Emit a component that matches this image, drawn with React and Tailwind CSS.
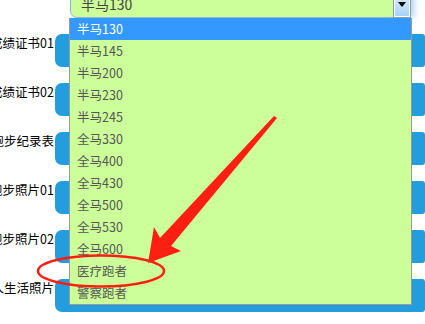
import React from 'react';

const options = [
    '半马130', '半马145', '半马200', '半马230', '半马245',
    '全马330', '全马400', '全马430', '全马500', '全马530', '全马600',
    '医疗跑者', '警察跑者',
];

const rows = ['成绩证书01', '成绩证书02', '跑步纪录表', '跑步照片01', '跑步照片02', '个人生活照片'];

const font = { fontFamily: '"Microsoft YaHei", "Noto Sans CJK SC", "Noto Sans", sans-serif' };

export default function App() {
    return (
        <div className="relative w-[425px] h-[324px] overflow-hidden bg-white" style={font}>
            {/* select field, scrolled partly off the top */}
            <div className="flex mt-[-10px]">
                <div className="w-[70px] shrink-0" />
                <div className="relative w-[341px] h-[28px] bg-[#ccff99] border border-[#8fb8e0] rounded-bl-[7px] shadow-[3px_0_6px_rgba(120,180,240,0.6)] flex items-center">
                    <span className="pl-[10px] text-[14px] text-[#444] leading-none">半马130</span>
                    <div className="absolute right-0 top-0 bottom-0 w-[16px] border border-white outline outline-1 outline-[#8a9cb0] bg-gradient-to-b from-[#e4f2ff] to-[#a6d3f6] flex justify-center items-center">
                        <div className="w-0 h-0 border-l-[4px] border-r-[4px] border-t-[5px] border-l-transparent border-r-transparent border-t-black" />
                    </div>
                </div>
            </div>

            {/* form rows */}
            <div className="flex flex-col gap-[16px] mt-[16px]">
                {rows.map((label) => (
                    <div key={label} className="flex h-[33px]">
                        <div className="w-[55px] shrink-0 flex justify-end overflow-visible">
                            <span className="whitespace-nowrap text-[12.5px] leading-[17px] pr-[1px] text-black">{label}</span>
                        </div>
                        <div className="w-[370px] h-[33px] bg-[#239ddd] rounded-l-[7px] rounded-r-[3px]" />
                    </div>
                ))}
            </div>

            {/* open dropdown list */}
            <ul className="absolute left-[69px] top-[18px] w-[343px] h-[287px] bg-[#ccff99] border border-[#999] border-t-0 flex flex-col">
                {options.map((o, i) => (
                    <li
                        key={o}
                        className={
                            i === 0
                                ? 'h-[22px] shrink-0 flex items-center pl-[7px] text-[12.5px] bg-[#3399ff] text-white'
                                : 'h-[22px] shrink-0 flex items-center pl-[7px] text-[12.5px] text-[#555]'
                        }
                    >
                        {o}
                    </li>
                ))}
            </ul>

            {/* red annotation */}
            <svg className="absolute left-0 top-0 pointer-events-none" width="425" height="324">
                <polygon
                    points="274,116 277,118 171,246 181,251 148,263 154,227 160,238"
                    fill="#ff1e12"
                />
                <ellipse cx="101" cy="271" rx="63" ry="15.5" fill="none" stroke="#ff1e12" strokeWidth="2.5" />
            </svg>
        </div>
    );
}
